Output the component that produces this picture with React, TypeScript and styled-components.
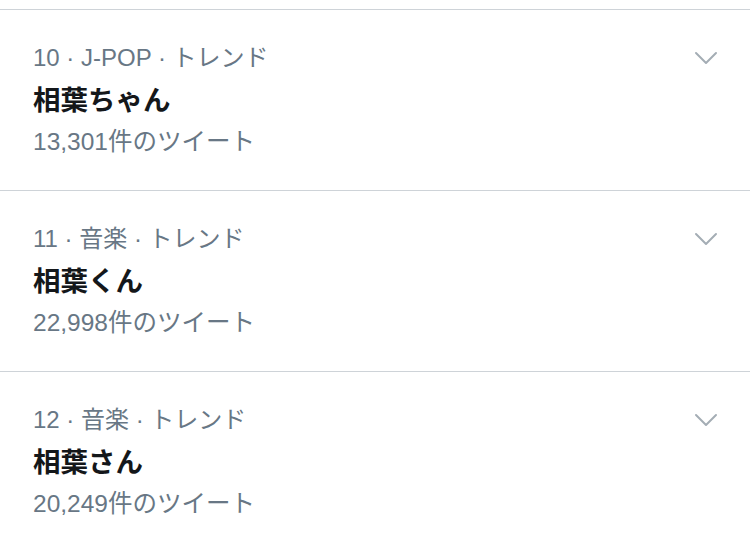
import React from 'react';
import styled, { createGlobalStyle } from 'styled-components';

const GlobalStyle = createGlobalStyle`
    body {
        margin: 0;
        background: #ffffff;
        font-family: "Liberation Sans", "Noto Sans CJK JP", sans-serif;
    }
`;

const List = styled.div`
    padding-top: 9px;
`;

const Item = styled.div`
    border-top: 1px solid #ced3d8;
    padding: 33px 32px 33px 33px;
`;

const Header = styled.div`
    display: flex;
    align-items: center;
    justify-content: space-between;
`;

const Meta = styled.div`
    font-size: 24px;
    line-height: 30px;
    color: #687785;
`;

const Title = styled.div`
    margin-top: 10px;
    font-size: 27.5px;
    line-height: 36px;
    font-weight: bold;
    color: #14171a;
`;

const Count = styled.div`
    margin-top: 8px;
    font-size: 24.5px;
    line-height: 30px;
    color: #687785;
`;

const Chevron = styled.svg`
    width: 24px;
    height: 16px;
    flex-shrink: 0;
`;

interface Trend {
    rank: number;
    category: string;
    name: string;
    tweets: string;
}

const trends: Trend[] = [
    { rank: 10, category: 'J-POP', name: '相葉ちゃん', tweets: '13,301' },
    { rank: 11, category: '音楽', name: '相葉くん', tweets: '22,998' },
    { rank: 12, category: '音楽', name: '相葉さん', tweets: '20,249' },
];

const App = () => (
    <>
        <GlobalStyle />
        <List>
            {trends.map(t => (
                <Item key={t.rank}>
                    <Header>
                        <Meta>
                            {t.rank} · {t.category} · トレンド
                        </Meta>
                        <Chevron viewBox="0 0 24 16">
                            <path
                                d="M2 3 L12 13 L22 3"
                                fill="none"
                                stroke="#a4adb5"
                                strokeWidth="2"
                                strokeLinecap="round"
                                strokeLinejoin="round"
                            />
                        </Chevron>
                    </Header>
                    <Title>{t.name}</Title>
                    <Count>{t.tweets}件のツイート</Count>
                </Item>
            ))}
        </List>
    </>
);

export default App;
